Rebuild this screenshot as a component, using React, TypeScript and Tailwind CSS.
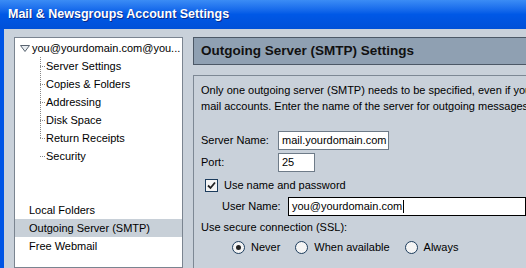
import React from 'react';

const treeItems = ['Server Settings', 'Copies & Folders', 'Addressing', 'Disk Space', 'Return Receipts', 'Security'];

const Radio: React.FC<{ checked?: boolean; label: string }> = ({ checked, label }) => (
  <div className="flex items-center">
    <span className="flex h-[13px] w-[13px] items-center justify-center rounded-full border border-[#1c3c5c] bg-[#f4f4f4]">
      {checked && <span className="h-[5px] w-[5px] rounded-full bg-[#222]" />}
    </span>
    <span className="ml-[6px]">{label}</span>
  </div>
);

const App: React.FC = () => {
  return (
    <div className="flex h-[268px] w-[526px] flex-col overflow-hidden bg-[#c9d1da] text-[11px] text-black" style={{ fontFamily: '"Liberation Sans", Arial, sans-serif' }}>
      {/* title bar */}
      <div className="flex h-[29px] shrink-0 items-center bg-gradient-to-b from-[#3b8cf5] via-[#0058e6] to-[#0050d8] pl-[8px] text-[12.5px] font-bold text-white" style={{ textShadow: '1px 1px 0 #0a2a8a' }}>
        Mail &amp; Newsgroups Account Settings
      </div>

      <div className="flex min-h-0 flex-1 border-l-[4px] border-[#0055e5] pl-[10px] pt-[8px]">
        {/* account tree */}
        <div className="flex w-[169px] shrink-0 flex-col border border-[#7a8490] bg-white pt-[1px]">
          <div className="flex h-[18px] items-center pl-[5px] whitespace-nowrap">
            <svg width="10" height="7" viewBox="0 0 10 7" className="mr-[2px]">
              <path d="M0.5 0.5 L9.5 0.5 L5 6.5 Z" fill="#e8ecf0" stroke="#5a6470" />
            </svg>
            <span>you@yourdomain.com@you...</span>
          </div>
          <div className="relative">
            <div className="absolute left-[25px] top-0 h-[81px] border-l border-dotted border-[#888]" />
            {treeItems.map((t) => (
              <div key={t} className="flex h-[18px] items-center pl-[25px]">
                <span className="mr-[1px] w-[5px] border-t border-dotted border-[#888]" />
                <span>{t}</span>
              </div>
            ))}
          </div>
          <div className="mt-[36px] flex h-[18px] items-center pl-[14px]">Local Folders</div>
          <div className="flex h-[18px] items-center bg-[#c8d0d8] pl-[14px]">Outgoing Server (SMTP)</div>
          <div className="flex h-[18px] items-center pl-[14px]">Free Webmail</div>
        </div>

        {/* settings pane */}
        <div className="ml-[10px] flex min-w-0 flex-1 flex-col">
          <div className="flex h-[28px] shrink-0 items-center border border-r-0 border-[#4c5866] bg-[#8fa0b2] pl-[7px] text-[13.5px] font-bold text-[#111]">
            Outgoing Server (SMTP) Settings
          </div>
          <div className="mt-[10px] flex-1 overflow-hidden border-l border-t border-[#7d8894] pl-[7px] pt-[6px]">
            <div className="leading-[16px] whitespace-nowrap">
              <div>Only one outgoing server (SMTP) needs to be specified, even if you</div>
              <div>mail accounts. Enter the name of the server for outgoing messages</div>
            </div>

            <div className="mt-[17px] flex h-[19px] items-center">
              <span className="w-[77px]">Server Name:</span>
              <div className="flex h-[19px] w-[111px] items-center border border-[#6e7b88] bg-white pl-[3px]">mail.yourdomain.com</div>
            </div>
            <div className="mt-[3px] flex h-[19px] items-center">
              <span className="w-[77px]">Port:</span>
              <div className="flex h-[19px] w-[37px] items-center border border-[#6e7b88] bg-white pl-[3px]">25</div>
            </div>
            <div className="mt-[4px] flex h-[18px] items-center pl-[4px]">
              <span className="flex h-[13px] w-[13px] items-center justify-center border border-[#1c3c5c] bg-[#f4f4f4]">
                <svg width="9" height="9" viewBox="0 0 9 9">
                  <path d="M1 4.5 L3.5 7 L8 1.5" fill="none" stroke="#222" strokeWidth="1.8" />
                </svg>
              </span>
              <span className="ml-[6px]">Use name and password</span>
            </div>
            <div className="mt-[3px] flex h-[19px] items-center pl-[21px]">
              <span className="w-[66px]">User Name:</span>
              <div className="flex h-[19px] flex-1 items-center border border-black bg-white pl-[3px]">
                you@yourdomain.com<span className="ml-px h-[13px] w-px bg-black" />
              </div>
            </div>
            <div className="mt-[3px] flex h-[17px] items-center">Use secure connection (SSL):</div>
            <div className="mt-[2px] flex h-[18px] items-center gap-[15px] pl-[31px]">
              <Radio checked label="Never" />
              <Radio label="When available" />
              <Radio label="Always" />
            </div>
          </div>
        </div>
      </div>
    </div>
  );
};

export default App;
